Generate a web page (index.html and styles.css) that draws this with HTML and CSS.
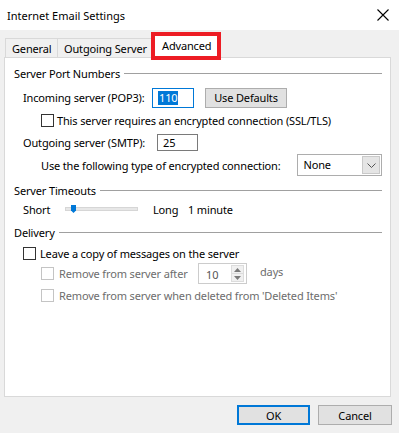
FILE: index.html
```html
<!DOCTYPE html>
<html>
<head>
<meta charset="utf-8">
<link rel="stylesheet" href="styles.css">
</head>
<body>
<div class="window">
  <div class="titlebar">
    <span class="title">Internet Email Settings</span>
    <svg class="close" width="12" height="12" viewBox="0 0 12 12"><path d="M0.5 0.5 L11.5 11.5 M11.5 0.5 L0.5 11.5" stroke="#000" stroke-width="1.1" fill="none"/></svg>
  </div>
  <div class="body">
    <div class="tabs">
      <div class="tab t-general">General</div>
      <div class="tab t-outgoing">Outgoing Server</div>
      <div class="tab active">Advanced</div>
    </div>
    <div class="panel">
      <div class="group-head r1"><span>Server Port Numbers</span><i class="rule"></i></div>

      <div class="row r2 ind1">
        <span class="lbl w-in">Incoming server (POP3):</span>
        <div class="textbox focus tb-in"><span class="sel">110</span></div>
        <div class="btn btn-def">Use Defaults</div>
      </div>

      <div class="row r3 ind2">
        <span class="check"></span>
        <span class="lbl">This server requires an encrypted connection (SSL/TLS)</span>
      </div>

      <div class="row r4 ind1">
        <span class="lbl w-out">Outgoing server (SMTP):</span>
        <div class="textbox tb-out">25</div>
      </div>

      <div class="row r5 ind2">
        <span class="lbl w-enc">Use the following type of encrypted connection:</span>
        <div class="select">
          <span class="sel-val">None</span>
          <span class="sel-btn"><svg width="9" height="5" viewBox="0 0 9 5"><path d="M0.5 0.5 L4.5 4.5 L8.5 0.5" stroke="#555" fill="none"/></svg></span>
        </div>
      </div>

      <div class="group-head r6"><span>Server Timeouts</span><i class="rule"></i></div>

      <div class="row r7 ind1">
        <span class="lbl w-short">Short</span>
        <div class="slider"><span class="track"></span><span class="thumb"></span></div>
        <span class="lbl w-long">Long</span>
        <span class="lbl">1 minute</span>
      </div>

      <div class="group-head r8"><span>Delivery</span><i class="rule"></i></div>

      <div class="row r9 ind1">
        <span class="check"></span>
        <span class="lbl gap4">Leave a copy of messages on the server</span>
      </div>

      <div class="row r10 ind2 disabled">
        <span class="check dis"></span>
        <span class="lbl gap5 w-after">Remove from server after</span>
        <div class="spin">
          <span class="spin-val">10</span>
          <span class="spin-btns">
            <span class="sb"><svg width="7" height="4" viewBox="0 0 7 4"><path d="M0 4 L3.5 0 L7 4 Z" fill="#7a7a7a"/></svg></span>
            <span class="sb"><svg width="7" height="4" viewBox="0 0 7 4"><path d="M0 0 L3.5 4 L7 0 Z" fill="#7a7a7a"/></svg></span>
          </span>
        </div>
        <span class="lbl days">days</span>
      </div>

      <div class="row r11 ind2 disabled">
        <span class="check dis"></span>
        <span class="lbl gap5">Remove from server when deleted from 'Deleted Items'</span>
      </div>
    </div>
    <div class="footer">
      <div class="btn btn-ok">OK</div>
      <div class="btn btn-cancel">Cancel</div>
    </div>
  </div>
</div>
</body>
</html>
```
FILE: styles.css
```css
* { box-sizing: border-box; }
html, body { margin: 0; padding: 0; }
body {
  width: 399px;
  height: 433px;
  background: #f0f0f0;
  font-family: "Noto Sans", "Open Sans", sans-serif;
  font-size: 11px;
  letter-spacing: -0.15px;
  color: #000;
  overflow: hidden;
}
.window { width: 399px; height: 433px; }
.titlebar {
  height: 30px;
  background: #fff;
  display: flex;
  align-items: center;
  justify-content: space-between;
  padding: 0 10px 0 7px;
}
.title { font-size: 11px; letter-spacing: 0; }
.close { display: block; margin-top: -1px; }

.body { padding: 0 8px 0 4px; }

.tabs {
  height: 27px;
  display: flex;
  align-items: flex-end;
  padding-left: 1px;
  position: relative;
  z-index: 2;
}
.tab {
  height: 19px;
  border: 1px solid #d9d9d9;
  border-bottom: none;
  background: #f0f0f0;
  display: flex;
  align-items: center;
  padding: 1px 0 0 6px;
  white-space: nowrap;
}
.t-general { width: 53px; }
.t-outgoing { width: 96px; margin-left: -1px; }
.tab.active {
  width: 66px;
  height: 24px;
  margin-left: 0;
  margin-bottom: -1px;
  background: #fff;
  padding: 0 0 3px 8px;
  outline: 4px solid #ed1c24;
  outline-offset: -2px;
}

.panel {
  height: 340px;
  background: #fff;
  border: 1px solid #d9d9d9;
  padding: 6px 8px 0 9px;
  position: relative;
  z-index: 1;
}

.group-head {
  display: flex;
  align-items: center;
  height: 18px;
}
.group-head span { white-space: nowrap; }
.rule {
  flex: 1;
  height: 1px;
  background: #a0a0a0;
  margin-left: 4px;
  margin-top: 1px;
}

.row {
  display: flex;
  align-items: center;
  white-space: nowrap;
}
.ind1 { padding-left: 9px; }
.ind2 { padding-left: 27px; }

.r2 { height: 21px; margin-top: 5px; }
.r3 { height: 20px; margin-top: 2px; }
.r4 { height: 22px; margin-top: 1px; }
.r5 { height: 22px; margin-top: 1px; }
.r6 { margin-top: 5px; }
.r7 { height: 20px; }
.r8 { margin-top: 4px; }
.r9 { height: 19px; margin-top: 3px; }
.r10 { height: 21px; margin-top: 0; }
.r11 { height: 20px; margin-top: 1px; }

.lbl { display: inline-block; }
.w-in { width: 129px; }
.w-out { width: 134px; }
.w-enc { width: 258px; }
.w-short { width: 42px; }
.w-long { width: 35px; }
.w-after { width: 139px; }
.gap4 { margin-left: 4px; }
.gap5 { margin-left: 5px; }

.textbox {
  background: #fff;
  border: 1px solid #7a7a7a;
  display: flex;
  align-items: center;
  padding-left: 5px;
}
.textbox.focus { border-color: #0078d7; }
.tb-in { width: 42px; height: 20px; }
.tb-out { width: 41px; height: 17px; }
.sel {
  background: #0078d7;
  color: #fff;
  padding: 0 1px;
  line-height: 14px;
}

.btn {
  background: #e1e1e1;
  border: 1px solid #adadad;
  display: flex;
  align-items: center;
  justify-content: center;
}
.btn-def { width: 82px; height: 20px; margin-left: 11px; }

.check {
  width: 13px;
  height: 13px;
  border: 1px solid #333;
  background: #fff;
  flex: none;
  margin-right: 3px;
}
.check.dis { border-color: #c4c4c4; margin-right: 0; }
.r9 .check { margin-right: 0; }

.select {
  width: 85px;
  height: 22px;
  border: 1px solid #adadad;
  background: #fff;
  display: flex;
  align-items: center;
  justify-content: space-between;
  padding: 1px;
}
.sel-val { padding-left: 4px; margin-top: -2px; }
.sel-btn {
  width: 18px;
  height: 18px;
  background: #e5e5e5;
  border: 1px solid #c9c9c9;
  display: flex;
  align-items: center;
  justify-content: center;
}

.slider {
  width: 88px;
  height: 20px;
  position: relative;
  flex: none;
}
.track {
  position: absolute;
  left: 0;
  right: 15px;
  top: 8px;
  height: 4px;
  background: #e7e7e7;
  border: 1px solid #d6d6d6;
}
.thumb {
  position: absolute;
  left: 6px;
  top: 6px;
  width: 5px;
  height: 8px;
  background: #0078d7;
  clip-path: polygon(0 0, 100% 0, 100% 70%, 50% 100%, 0 70%);
}

.disabled { color: #6d6d6d; }
.spin {
  width: 49px;
  height: 21px;
  border: 1px solid #cccccc;
  background: #fff;
  display: flex;
  align-items: center;
  justify-content: space-between;
  padding: 1px;
}
.spin-val { padding-left: 6px; color: #555; margin-top: 1px; }
.spin-btns {
  width: 13px;
  height: 17px;
  display: flex;
  flex-direction: column;
  margin-right: 1px;
}
.sb {
  flex: 1;
  background: #f0f0f0;
  border: 1px solid #dcdcdc;
  display: flex;
  align-items: center;
  justify-content: center;
}
.sb + .sb { border-top: none; }
.days { margin-left: 13px; margin-top: -4px; }

.footer {
  display: flex;
  justify-content: flex-end;
  padding-top: 8px;
  padding-right: 0;
}
.btn-ok { width: 73px; height: 20px; border: 2px solid #0078d7; }
.btn-cancel { width: 74px; height: 20px; margin-left: 8px; margin-right: -1px; }
```
